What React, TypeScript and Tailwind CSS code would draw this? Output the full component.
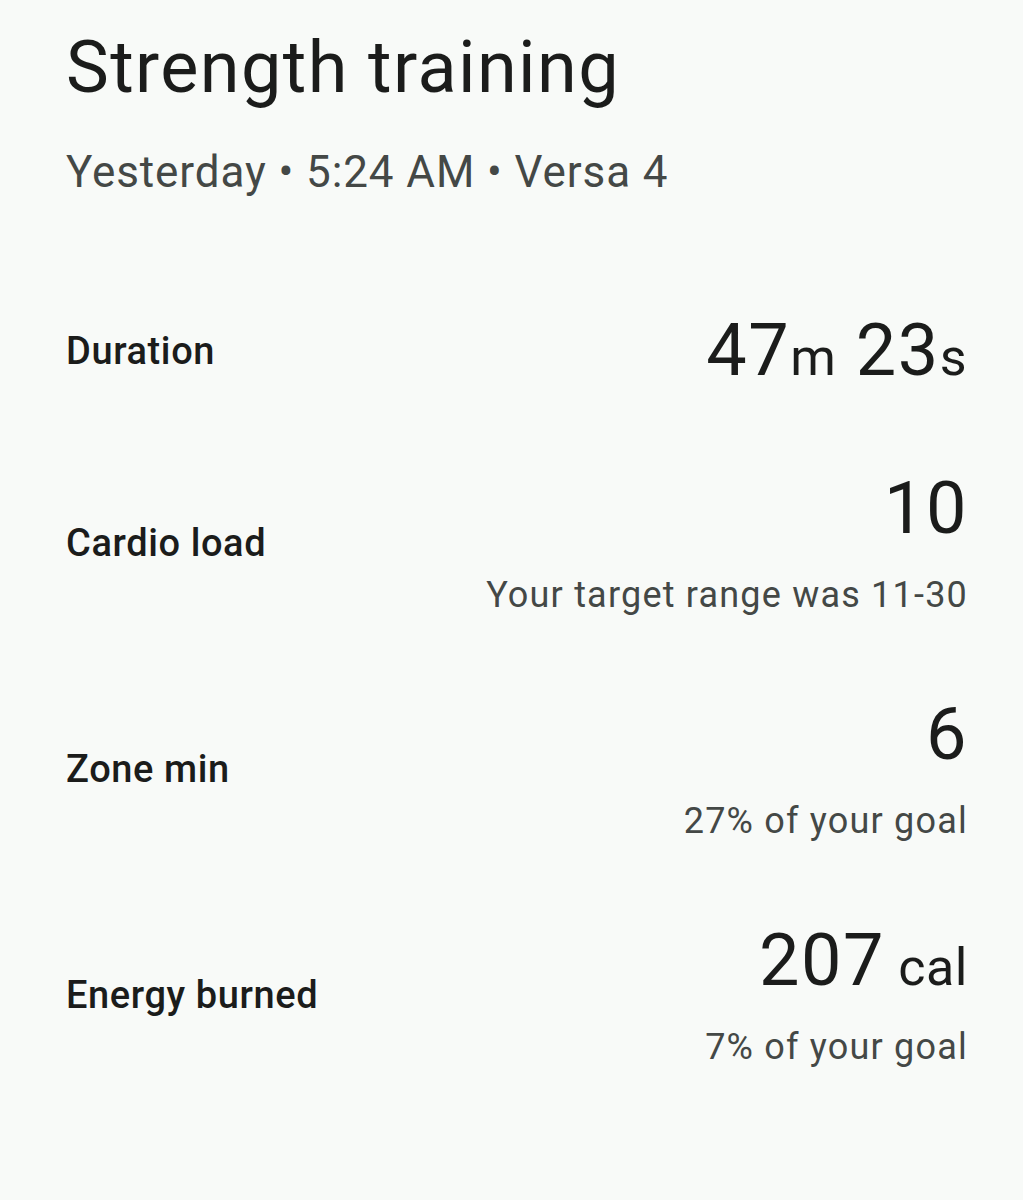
const stats = [
  { label: "Duration", value: "47", unit: "m", value2: "23", unit2: "s", note: "" },
  { label: "Cardio load", value: "10", unit: "", value2: "", unit2: "", note: "Your target range was 11-30" },
  { label: "Zone min", value: "6", unit: "", value2: "", unit2: "", note: "27% of your goal" },
  { label: "Energy burned", value: "207", unit: " cal", value2: "", unit2: "", note: "7% of your goal" },
];

function StatRow({ label, value, unit, value2, unit2, note }: (typeof stats)[number]) {
  return (
    <div className="flex items-center justify-between">
      <span className="text-[38px] leading-none font-medium tracking-[0.6px] text-[#1b1c1b]">{label}</span>
      <div className="flex flex-col items-end">
        <div className="text-[72px] leading-none tracking-[1.5px] text-[#1b1c1b] whitespace-pre">
          {value}
          {unit && <span className="text-[52px] tracking-[0.5px]">{unit}</span>}
          {value2 && (
            <>
              {" "}
              {value2}
              <span className="text-[52px]">{unit2}</span>
            </>
          )}
        </div>
        {note && <p className="mt-[32px] text-[36px] leading-none tracking-[1.2px] text-[#444846]">{note}</p>}
      </div>
    </div>
  );
}

export default function App() {
  return (
    <div className="min-h-[1200px] w-full bg-[#f8faf8] font-['Roboto',sans-serif]">
      <div className="pl-[66px] pr-[55px] pt-[32px]">
        <h1 className="text-[72px] leading-none font-normal tracking-[1.4px] text-[#1b1c1b]">Strength training</h1>
        <p className="mt-[46px] text-[44px] leading-none tracking-[0.9px] text-[#444846]">Yesterday • 5:24 AM • Versa 4</p>
        <div className="mt-[121px] flex flex-col gap-[86px]">
          {stats.map((s) => (
            <StatRow key={s.label} {...s} />
          ))}
        </div>
      </div>
    </div>
  );
}
